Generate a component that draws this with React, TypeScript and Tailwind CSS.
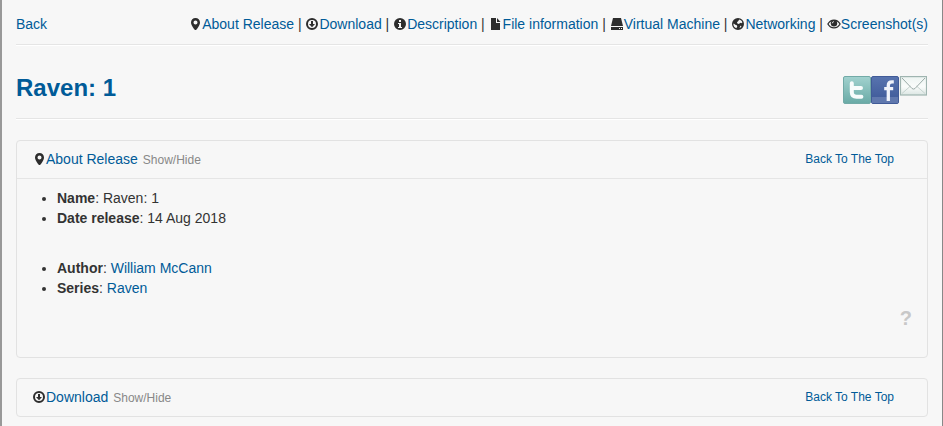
import React from "react";

type IconName = "pin" | "download" | "info" | "file" | "drive" | "globe" | "eye";

function Icon({ name }: { name: IconName }) {
  return (
    <svg viewBox="0 0 14 14" className="inline-block h-[14px] w-[14px] shrink-0 align-[-2px] fill-[#2d2d2d]">
      {name === "pin" && (
        <path fillRule="evenodd" d="M7.500 1C4.900 1 3 2.900 3 5.400c0 1.700 1 3.400 2 5 .6.900 1.100 1.600 1.700 2.300.4.500 1.200.5 1.600 0 .6-.7 1.100-1.400 1.700-2.300 1-1.600 2-3.300 2-5C12 2.900 10.100 1 7.500 1Zm0 2.400a2 2 0 1 1 0 4 2 2 0 0 1 0-4Z" />
      )}
      {name === "download" && (
        <path fillRule="evenodd" d="M7 1a6 6 0 1 0 0 12A6 6 0 0 0 7 1Zm0 2a4 4 0 1 1 0 8 4 4 0 0 1 0-8ZM6 4h2v3h2l-3 3.200L4 7h2Z" />
      )}
      {name === "info" && (
        <path fillRule="evenodd" d="M7 1a6 6 0 1 0 0 12A6 6 0 0 0 7 1ZM6 3h2v2H6ZM5 6h3v4h1v1H5v-1h1V7H5Z" />
      )}
      {name === "file" && <path d="M2 1h5v5h4v7H2ZM8 1l3.500 4H8Z" />}
      {name === "drive" && (
        <path fillRule="evenodd" d="M3 1h8l2 8H1ZM1 10h12v3H1Zm8 1v1h1v-1Zm2 0v1h1v-1Z" />
      )}
      {name === "globe" && (
        <path fillRule="evenodd" d="M7 1a6 6 0 1 0 0 12A6 6 0 0 0 7 1Zm1.200 1.600c1.500.4 2.700 1.400 3.200 2.900l-1.200.700-1-.500-1.200 1.200-1.600-.5-.4-1.200 1.300-1.100ZM2.700 6.500l1.600 1.200 1.500.6.500 1.200-1 1.800C3.500 10.500 2.400 9 2.400 7.200Zm6.600 2.300 1.300.2-1 1.600-1 .300Z" />
      )}
      {name === "eye" && (
        <>
          <path d="M.900 7C2.300 4.500 4.400 3.100 7 3.100S11.700 4.500 13.100 7C11.700 9.500 9.600 10.900 7 10.900S2.300 9.500.900 7Z" fill="#f7f7f7" stroke="#2d2d2d" strokeWidth="1.300" />
          <circle cx="7" cy="6.300" r="3.200" />
          <path d="M5.300 6.300A1.700 1.700 0 0 1 7 4.600" fill="none" stroke="#f7f7f7" strokeWidth=".800" />
        </>
      )}
    </svg>
  );
}

const navigation: { icon: IconName; label: string }[] = [
  { icon: "pin", label: "About Release" },
  { icon: "download", label: "Download" },
  { icon: "info", label: "Description" },
  { icon: "file", label: "File information" },
  { icon: "drive", label: "Virtual Machine" },
  { icon: "globe", label: "Networking" },
  { icon: "eye", label: "Screenshot(s)" },
];

const link = "text-[#005b98]";

function PanelHeading({ icon, title }: { icon: IconName; title: string }) {
  return (
    <div className="flex h-[37px] items-center justify-between pr-[33px] pl-[15px]">
      <div className="whitespace-pre">
        <Icon name={icon} />
        <a className={link}>{title}</a>
        <span className="ml-[5px] text-[12px] text-[#888]">Show/Hide</span>
      </div>
      <a className={`pb-[2px] text-[12px] ${link}`}>Back To The Top</a>
    </div>
  );
}

function SocialLinks() {
  return (
    <div className="mt-[11px] mr-px flex items-start">
      <svg viewBox="0 0 28 28" className="h-7 w-7">
        <defs>
          <linearGradient id="tw" x2="0" y2="1"><stop stopColor="#a2d2cf" /><stop offset="1" stopColor="#69aaa6" /></linearGradient>
        </defs>
        <rect x=".5" y=".5" width="27" height="27" rx="1.500" fill="url(#tw)" stroke="#72aaa7" />
        <path d="M8.800 7.300V16q0 4.800 4.800 4.800h4.800M8.800 12h9.200" fill="none" stroke="#f8fcfc" strokeWidth="4" strokeLinecap="round" strokeLinejoin="round" />
      </svg>
      <svg viewBox="0 0 28 28" className="h-7 w-7">
        <defs>
          <linearGradient id="fb" x2="0" y2="1"><stop stopColor="#5874af" /><stop offset="1" stopColor="#3c5797" /></linearGradient>
        </defs>
        <rect x=".5" y=".5" width="27" height="27" rx="1.500" fill="url(#fb)" stroke="#415b98" />
        <path d="M1 21h26v6H1Z" fill="#6078ae" />
        <path d="M17.300 25V9.500q0-3.700 3.700-3.700h1.800M13.200 12.700h9" fill="none" stroke="#f0f3fa" strokeWidth="3.300" />
      </svg>
      <svg viewBox="0 0 28 20" className="h-5 w-7">
        <defs>
          <linearGradient id="mail" x2="0" y2="1"><stop stopColor="#edf4f2" /><stop offset=".55" stopColor="#fafcfb" /><stop offset="1" stopColor="#dbe6e3" /></linearGradient>
        </defs>
        <rect x="1.500" y=".6" width="26" height="18.400" fill="url(#mail)" stroke="#9fb4b0" strokeWidth="1.200" />
        <path d="M3 17.500 11.500 10M26 17.500 17.500 10" fill="none" stroke="#c2cfcc" strokeWidth=".900" />
        <path d="m3 2 10 10.500q1.500 1.200 3 0L26 2" fill="none" stroke="#9aaaa7" />
      </svg>
    </div>
  );
}

export default function App() {
  return (
    <div className="h-[426px] overflow-hidden border-r border-l-2 border-r-[#888] border-l-[#999] bg-[#f7f7f7] pr-[14px] pl-[14px] font-['Liberation_Sans',Arial,sans-serif] text-[14px] leading-[20px] text-[#333]">
      <nav className="flex h-[45px] justify-between border-b border-[#e5e5e5] pt-[14px] shadow-[0_1px_0_#fff]">
        <a className={link}>Back</a>
        <div className="whitespace-pre">
          {navigation.map(({ icon, label }, index) => (
            <React.Fragment key={label}>
              {index > 0 && " | "}
              <Icon name={icon} /><a className={link}>{label}</a>
            </React.Fragment>
          ))}
        </div>
      </nav>

      <header className="mt-[20px] flex h-[54px] justify-between border-b border-[#e5e5e5] shadow-[0_1px_0_#fff]">
        <h1 className={`pt-[3px] text-[24px] leading-[40px] font-bold ${link}`}>Raven: 1</h1>
        <SocialLinks />
      </header>

      <section className="mt-[21px] h-[218px] rounded-[4px] border border-[#e2e2e2]">
        <PanelHeading icon="pin" title="About Release" />
        <div className="border-t border-[#e5e5e5] px-[15px] pt-[9px]">
          <ul className="ml-[25px] list-disc">
            <li><b>Name</b>: Raven: 1</li>
            <li><b>Date release</b>: 14 Aug 2018</li>
          </ul>
          <ul className="mt-[30px] ml-[25px] list-disc">
            <li><b>Author</b>: <a className={link}>William McCann</a></li>
            <li><b>Series</b>: <a className={link}>Raven</a></li>
          </ul>
          <div className="mt-[10px] text-right text-[20px] font-bold text-[#c8c8c8]">?</div>
        </div>
      </section>

      <section className="mt-[20px] rounded-[4px] border border-[#e2e2e2]">
        <PanelHeading icon="download" title="Download" />
      </section>
    </div>
  );
}
